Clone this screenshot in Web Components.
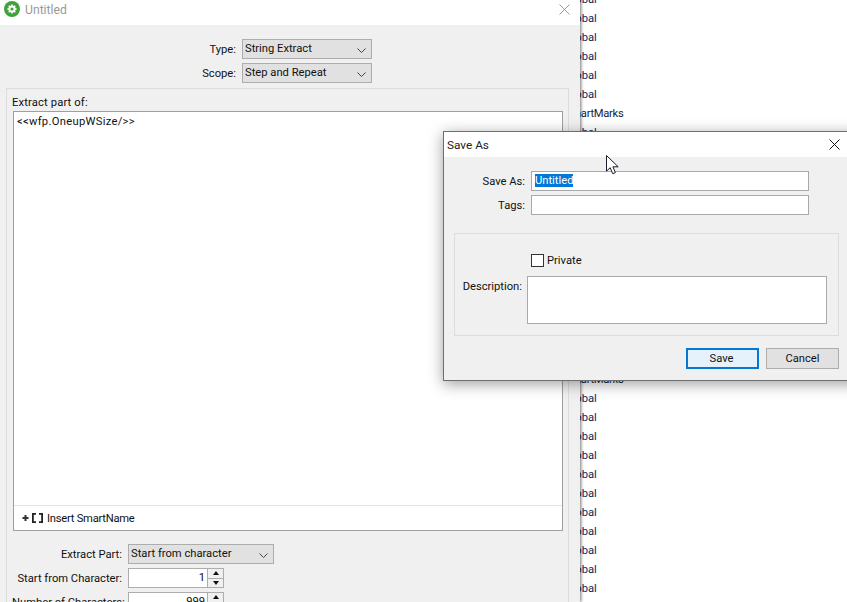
<!DOCTYPE html>
<html lang="en"><head><meta charset="utf-8"><title>Save As</title>
<style>
html,body{margin:0;padding:0;height:100%;background:#fff;overflow:hidden}
body{font:11.2px Roboto,"Noto Sans",sans-serif;color:#111}
</style></head><body>
<app-desktop>
  <list-window></list-window>
  <extract-window></extract-window>
  <save-dialog></save-dialog>
  <mouse-cursor></mouse-cursor>
</app-desktop>
<script>
const FONT='Roboto,"Noto Sans",sans-serif';
function def(name,html){
  customElements.define(name,class extends HTMLElement{
    constructor(){super();const r=this.attachShadow({mode:'open'});
      r.innerHTML=typeof html==='function'?html(this):html;}
  });
}
const chevron=`<svg width="9" height="5" viewBox="0 0 9 5"><path d="M.5.5 4.500 4.500 8.500.5" fill="none" stroke="#444" stroke-width="1"/></svg>`;
const closeX=(c,s)=>`<svg width="${s}" height="${s}" viewBox="0 0 11 11"><path d="M.5.5l10 10M10.500.5l-10 10" fill="none" stroke="${c}" stroke-width="1"/></svg>`;

def('app-desktop',`<style>:host{display:block;position:relative;width:847px;height:602px;overflow:hidden;background:#fff}</style><slot></slot>`);

def('list-window',()=>{
  const rows=['Global','Global','Global','Global','Global','Global','SmartMarks'];
  for(let i=0;i<13;i++)rows.push('Global');
  rows.push('SmartMarks');
  for(let i=0;i<11;i++)rows.push('Global');
  return `<style>:host{position:absolute;left:0;top:-10px;width:847px;display:block;font:11.2px ${FONT};color:#0a2a5c}
  .c{display:flex;flex-direction:column;align-items:flex-start;margin-left:565px}
  div div{height:19px;line-height:19px;white-space:nowrap}
  .m{margin-left:0;color:#16233a;letter-spacing:-.3px}</style>
  <div class="c">${rows.map(t=>`<div class="${t==='SmartMarks'?'m':''}">${t}</div>`).join('')}</div>`;
});

def('ui-select',`<style>:host{display:flex;align-items:center;justify-content:space-between;box-sizing:border-box;height:20px;width:var(--w,130px);padding:0 5px 0 2px;background:#e1e1e1;border:1px solid #adadad;color:#111;white-space:nowrap;line-height:18px}
 svg{margin-top:2px}</style><span><slot></slot></span>${chevron}`);

def('ui-row',`<style>:host{display:grid;grid-template-columns:var(--l) auto;column-gap:6px;align-items:center;justify-content:start}
 .l{text-align:right;white-space:nowrap}</style><span class="l"><slot name="label"></slot></span><slot></slot>`);

def('spin-box',`<style>:host{display:flex;box-sizing:border-box;width:96px;height:20px;border:1px solid #adadad;background:#fff}
 .v{flex:1;text-align:right;padding:0 2px;line-height:18px}
 .b{width:15px;border-left:1px solid #adadad;background:#f0f0f0;display:flex;flex-direction:column}
 .b span{flex:1;display:flex;align-items:center;justify-content:center}
 .b span+span{border-top:1px solid #adadad}
 .u{width:0;height:0;border:3.5px solid transparent;border-top:0;border-bottom:4px solid #111}
 .d{width:0;height:0;border:3.5px solid transparent;border-bottom:0;border-top:4px solid #111}
 </style><div class="v"><slot></slot></div><div class="b"><span><i class="u"></i></span><span><i class="d"></i></span></div>`);

def('extract-window',`<style>
 :host{position:absolute;left:0;top:0;width:580px;height:602px;display:flex;flex-direction:column;background:#f0f0f0;box-shadow:1px 0 3px rgba(0,0,0,.55);overflow:hidden;font:11.2px ${FONT};color:#111}
 .t{flex:none;background:#fff;display:flex;align-items:center;padding:0 10px 7px 4px;box-sizing:border-box;height:25px;color:#999;font-size:12.2px;gap:5px}
 .t span{flex:1;padding-top:2px}
 .t svg{display:block}
 .top{display:flex;flex-direction:column;gap:4px;padding-top:14px;--l:236px}
 .panel{margin:5px 11px 0 6px;border:1px solid #dcdcdc;border-bottom:0;padding:6px 5px 0 5px;flex:1;display:flex;flex-direction:column}
 .cap{height:16px;line-height:16px;letter-spacing:.15px}
 .ta{box-sizing:border-box;height:420px;border:1px solid #a0a0a0;background:#fff;margin-left:1px;display:flex;flex-direction:column}
 .txt{flex:1;padding:1px 3px;line-height:17px;letter-spacing:.3px}
 .ins{height:24px;border-top:1px solid #e3e3e3;display:flex;align-items:center;gap:4px;padding-left:8px}
 .ins svg{display:block}
 .ins span{letter-spacing:-.25px}
 .bot{display:flex;flex-direction:column;gap:4px;padding-top:13px;--l:110px}
 </style>
 <div class="t">
  <svg width="16" height="16" viewBox="0 0 16 16"><circle cx="8" cy="8" r="8" fill="#3fa33a"/><circle cx="8" cy="8" r="2.6" fill="none" stroke="#fff" stroke-width="2"/><path d="M8 3.4v2M8 10.6v2M3.4 8h2M10.6 8h2M4.8 4.800l1.300 1.300M9.900 9.900l1.300 1.300M11.200 4.800 9.900 6.100M6.100 9.900l-1.300 1.300" stroke="#fff" stroke-width="1.600"/></svg>
  <span>Untitled</span>${closeX('#9a9a9a',11)}
 </div>
 <div class="top">
  <ui-row><span slot="label">Type:</span><ui-select>String Extract</ui-select></ui-row>
  <ui-row><span slot="label">Scope:</span><ui-select>Step and Repeat</ui-select></ui-row>
 </div>
 <div class="panel">
  <div class="cap">Extract part of:</div>
  <div class="ta">
   <div class="txt">&lt;&lt;wfp.OneupWSize/&gt;&gt;</div>
   <div class="ins">
    <svg width="21" height="10" viewBox="0 0 21 10"><path d="M3.500 2v6M.5 5h6" stroke="#333" stroke-width="2"/><path d="M14 .9h-3.100v8.200h3.100M17 .9h3.100v8.200h-3.100" fill="none" stroke="#222" stroke-width="1.800"/></svg>
    <span>Insert SmartName</span>
   </div>
  </div>
  <div class="bot">
   <ui-row><span slot="label">Extract Part:</span><ui-select style="--w:146px">Start from character</ui-select></ui-row>
   <ui-row><span slot="label">Start from Character:</span><spin-box>1</spin-box></ui-row>
   <ui-row><span slot="label">Number of Characters:</span><spin-box>999</spin-box></ui-row>
  </div>
 </div>`);

def('ui-field',`<style>:host{display:block;box-sizing:border-box;background:#fff;border:1px solid #a9a9a9;height:20px;width:278px;padding:1px 3px;line-height:16px;white-space:nowrap}
 ::slotted(mark){background:#0078d7;color:#fff}</style><slot></slot>`);

def('ui-button',`<style>:host{display:flex;align-items:center;justify-content:center;box-sizing:border-box;width:73px;height:21px;background:#e1e1e1;border:1px solid #adadad}
 :host([primary]){background:#e5f1fb;border:2px solid #0078d7;padding-right:2px}</style><slot></slot>`);

def('save-dialog',`<style>
 :host{position:absolute;left:443px;top:131px;width:420px;height:250px;box-sizing:border-box;display:flex;flex-direction:column;background:#f0f0f0;border:1px solid #6e6e6e;box-shadow:0 3px 14px rgba(0,0,0,.38);font:11.2px ${FONT};color:#111}
 .t{height:25px;flex:none;background:#fff;display:flex;align-items:center;padding-left:3px;font-size:11.8px;color:#222;position:relative}
 .t svg{position:absolute;left:385px;top:7px}
 .f{display:flex;flex-direction:column;gap:4px;padding-top:14px;--l:81px}
 .g{margin:18px 7px 0 10px;width:385px;height:103px;box-sizing:border-box;border:1px solid #dcdcdc;display:flex;flex-direction:column;padding-top:20px}
 .chk{display:flex;align-items:center;gap:3px;margin-left:76px;line-height:13px}
 .chk i{width:11px;height:11px;border:1px solid #333;background:#fff;display:block}
 .d{display:grid;grid-template-columns:67px auto;column-gap:5px;margin-top:9px}
 .d span{text-align:right;padding-top:4px}
 .d div{box-sizing:border-box;width:300px;height:48px;background:#fff;border:1px solid #a9a9a9}
 .b{display:flex;gap:7px;margin:12px 0 0 242px}
 </style>
 <div class="t">Save As${closeX('#111',11)}</div>
 <div class="f">
  <ui-row><span slot="label">Save As:</span><ui-field><mark>Untitled</mark></ui-field></ui-row>
  <ui-row><span slot="label">Tags:</span><ui-field></ui-field></ui-row>
 </div>
 <div class="g">
  <div class="chk"><i></i><span>Private</span></div>
  <div class="d"><span>Description:</span><div></div></div>
 </div>
 <div class="b"><ui-button primary>Save</ui-button><ui-button>Cancel</ui-button></div>`);

def('mouse-cursor',`<style>:host{position:absolute;left:606px;top:155px;display:block;line-height:0}</style>
 <svg width="13" height="20" viewBox="0 0 13 20"><path d="M.5.5v15.600l3.700-3.400 2.500 6 2.700-1.100-2.500-5.800h5.300z" fill="#fff" stroke="#1b1b2b" stroke-width="1"/></svg>`);
</script>
</body></html>
